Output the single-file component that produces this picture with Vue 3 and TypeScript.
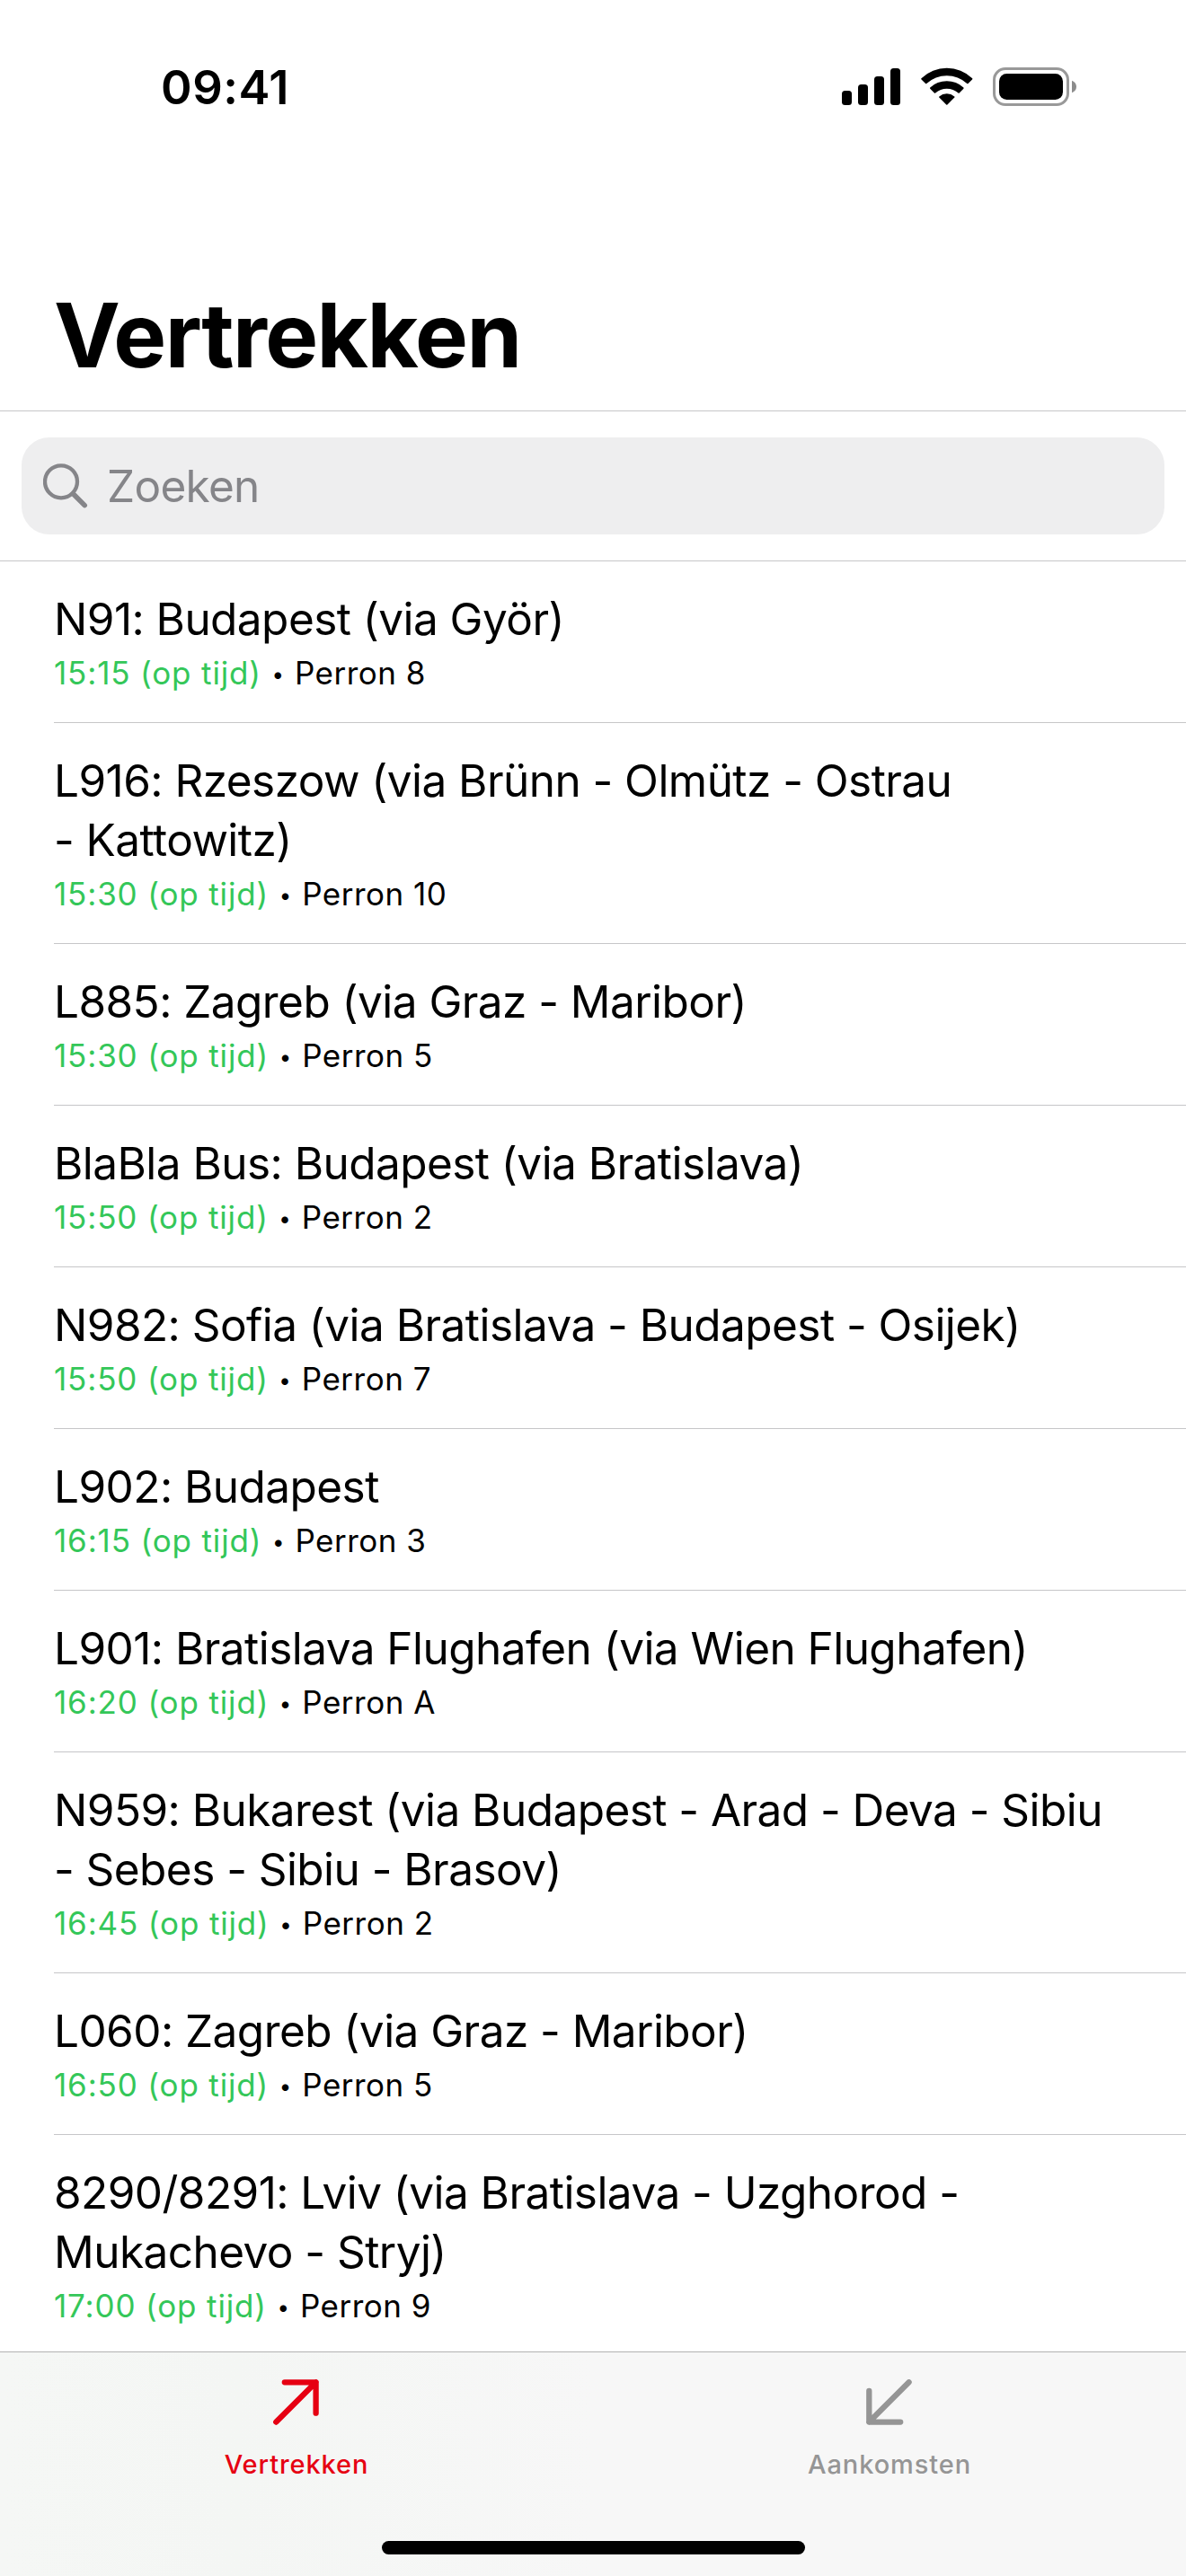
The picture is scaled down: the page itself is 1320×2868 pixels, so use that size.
<script setup lang="ts">
interface Departure {
  lines: string[]
  time: string
  platform: string
}

const departures: Departure[] = [
  { lines: ['N91: Budapest (via Györ)'], time: '15:15', platform: '8' },
  { lines: ['L916: Rzeszow (via Brünn - Olmütz - Ostrau', '- Kattowitz)'], time: '15:30', platform: '10' },
  { lines: ['L885: Zagreb (via Graz - Maribor)'], time: '15:30', platform: '5' },
  { lines: ['BlaBla Bus: Budapest (via Bratislava)'], time: '15:50', platform: '2' },
  { lines: ['N982: Sofia (via Bratislava - Budapest - Osijek)'], time: '15:50', platform: '7' },
  { lines: ['L902: Budapest'], time: '16:15', platform: '3' },
  { lines: ['L901: Bratislava Flughafen (via Wien Flughafen)'], time: '16:20', platform: 'A' },
  { lines: ['N959: Bukarest (via Budapest - Arad - Deva - Sibiu', '- Sebes - Sibiu - Brasov)'], time: '16:45', platform: '2' },
  { lines: ['L060: Zagreb (via Graz - Maribor)'], time: '16:50', platform: '5' },
  { lines: ['8290/8291: Lviv (via Bratislava - Uzghorod -', 'Mukachevo - Stryj)'], time: '17:00', platform: '9' },
]
</script>

<template>
  <div class="screen">
    <header class="status">
      <span class="clock">09:41</span>
      <div class="indicators">
        <svg class="signal" width="65" height="42" viewBox="0 0 65 42">
          <rect x="0" y="26" width="11" height="16" rx="3.5" />
          <rect x="18" y="19" width="11" height="23" rx="3.5" />
          <rect x="36" y="10" width="11" height="32" rx="3.5" />
          <rect x="54" y="1" width="11" height="41" rx="3.5" />
        </svg>
        <svg class="wifi" width="58" height="42" viewBox="0 0 58 42">
          <path d="M.4 12.3Q0 12.9.5 13.5L5.1 18.1Q5.7 18.6 6.3 18.1A33.3 33.3 0 0 1 51.3 18.1Q51.9 18.6 52.5 18.1L57.1 13.5Q57.6 12.9 57.2 12.3A41 41 0 0 0 .4 12.3Z" />
          <path d="M10.2 22.5Q9.7 23.1 10.2 23.7L14.9 28.4Q15.5 28.9 16.1 28.4A19.3 19.3 0 0 1 41.5 28.4Q42.1 28.9 42.7 28.4L47.4 23.7Q47.9 23.1 47.4 22.5A27.2 27.2 0 0 0 10.2 22.5Z" />
          <path d="M20.3 32.4Q19.8 33 20.3 33.6L28.2 41.5Q28.8 42.1 29.4 41.5L37.3 33.6Q37.8 33 37.3 32.4A13.4 13.4 0 0 0 20.3 32.4Z" />
        </svg>
        <svg class="battery" width="94" height="43" viewBox="0 0 94 43">
          <rect x="1.5" y="1.5" width="82" height="40" rx="12.5" fill="none" stroke="#999" stroke-width="3" />
          <rect x="7" y="7" width="71" height="29" rx="8.5" />
          <path d="M88 14.7Q93 17 93 21.5T88 28.3Z" fill="#8c8c8c" />
        </svg>
      </div>
    </header>

    <h1 class="title">Vertrekken</h1>

    <div class="search-area">
      <div class="search">
        <svg class="lens" width="51" height="51" viewBox="0 0 51 51" fill="none" stroke="#858589" stroke-linecap="round">
          <circle cx="20" cy="20.3" r="18" stroke-width="4.3" />
          <path d="M33.4 33.7L46.2 46.6" stroke-width="5.6" />
        </svg>
        <span class="placeholder">Zoeken</span>
      </div>
    </div>

    <main class="list">
      <article v-for="(item, i) in departures" :key="i" class="row">
        <div class="route">
          <div v-for="line in item.lines" :key="line">{{ line }}</div>
        </div>
        <div class="meta">
          <span class="time">{{ item.time }} (op tijd)</span>
          <span class="dot">•</span>
          <span>Perron {{ item.platform }}</span>
        </div>
      </article>
    </main>

    <footer class="tabbar">
      <nav class="tabs">
        <div class="tab active">
          <svg width="52" height="52" viewBox="0 0 52 52" fill="none" stroke="currentColor" stroke-width="6.3" stroke-linecap="round" stroke-linejoin="round">
            <path d="M12.8 3.3H47.6V37.7M47.6 3.3L3.3 47.6" />
          </svg>
          <span>Vertrekken</span>
        </div>
        <div class="tab">
          <svg width="52" height="52" viewBox="0 0 52 52" fill="none" stroke="currentColor" stroke-width="6.3" stroke-linecap="round" stroke-linejoin="round">
            <path d="M3.3 12.8V47.6H38.2M3.3 47.6L47.6 3.3" />
          </svg>
          <span>Aankomsten</span>
        </div>
      </nav>
      <div class="home-indicator"></div>
    </footer>
  </div>
</template>

<style>
body {
  margin: 0;
  background: #fff;
}
</style>

<style scoped>
.screen {
  display: flex;
  flex-direction: column;
  width: 1320px;
  height: 2868px;
  overflow: hidden;
  background: #fff;
  color: #000;
  font-family: Inter, "Liberation Sans", sans-serif;
  white-space: nowrap;
}

svg {
  display: block;
  flex: none;
}

.status {
  display: flex;
  justify-content: space-between;
  align-items: flex-start;
  height: 186px;
  flex: none;
  padding: 0 121px 0 179px;
}

.clock {
  margin-top: 65px;
  font-size: 52.5px;
  font-weight: 600;
  line-height: 64px;
  letter-spacing: 0.5px;
}

.indicators {
  display: flex;
  margin-top: 75px;
}

.wifi {
  margin-left: 23px;
}

.battery {
  margin-left: 22px;
}

.title {
  flex: none;
  height: 147px;
  margin: 0;
  padding: 124px 60px 0;
  font-size: 99px;
  font-weight: 700;
  line-height: 126px;
  letter-spacing: -1.6px;
}

.search-area {
  flex: none;
  box-sizing: border-box;
  height: 168px;
  padding: 29px 24px 0;
  border-top: 1px solid #c6c6c8;
  border-bottom: 1px solid #c6c6c8;
}

.search {
  display: flex;
  align-items: center;
  box-sizing: border-box;
  height: 108px;
  padding: 0 24px;
  border-radius: 31px;
  background: #eeeeef;
}

.placeholder {
  margin-left: 20px;
  color: #858589;
  font-size: 49.5px;
  line-height: 62px;
  letter-spacing: -0.7px;
}

.list {
  flex: 1;
  min-height: 0;
  overflow: hidden;
}

.row {
  box-sizing: border-box;
  margin-left: 60px;
  padding: 31px 0 34px;
  border-bottom: 1px solid #c6c6c8;
}

.route {
  font-size: 49.5px;
  line-height: 66px;
  letter-spacing: -0.55px;
}

.meta {
  display: flex;
  height: 42px;
  margin-top: 6px;
  font-size: 35px;
  line-height: 42px;
  letter-spacing: 0.5px;
}

.time {
  color: #34c759;
  letter-spacing: 0.85px;
}

.dot {
  width: 37px;
  font-size: 24px;
  line-height: 46px;
  text-align: center;
}

.tabbar {
  display: flex;
  flex: none;
  flex-direction: column;
  align-items: center;
  box-sizing: border-box;
  height: 250px;
  border-top: 1px solid #b2b2b2;
  background: linear-gradient(90deg, #f5f7f5 0%, #f4f6f4 20%, #f7f7f7 50%, #f7f7f7 100%);
}

.tabs {
  display: flex;
  width: 100%;
  height: 210px;
}

.tab {
  display: flex;
  flex: 1;
  flex-direction: column;
  align-items: center;
  padding-top: 30px;
  color: #959595;
}

.tab.active {
  color: #e60012;
}

.tab span {
  margin-top: 25px;
  font-size: 29px;
  font-weight: 500;
  line-height: 36px;
  letter-spacing: 0.9px;
}

.home-indicator {
  width: 471px;
  height: 15px;
  border-radius: 8px;
  background: #000;
}
</style>
